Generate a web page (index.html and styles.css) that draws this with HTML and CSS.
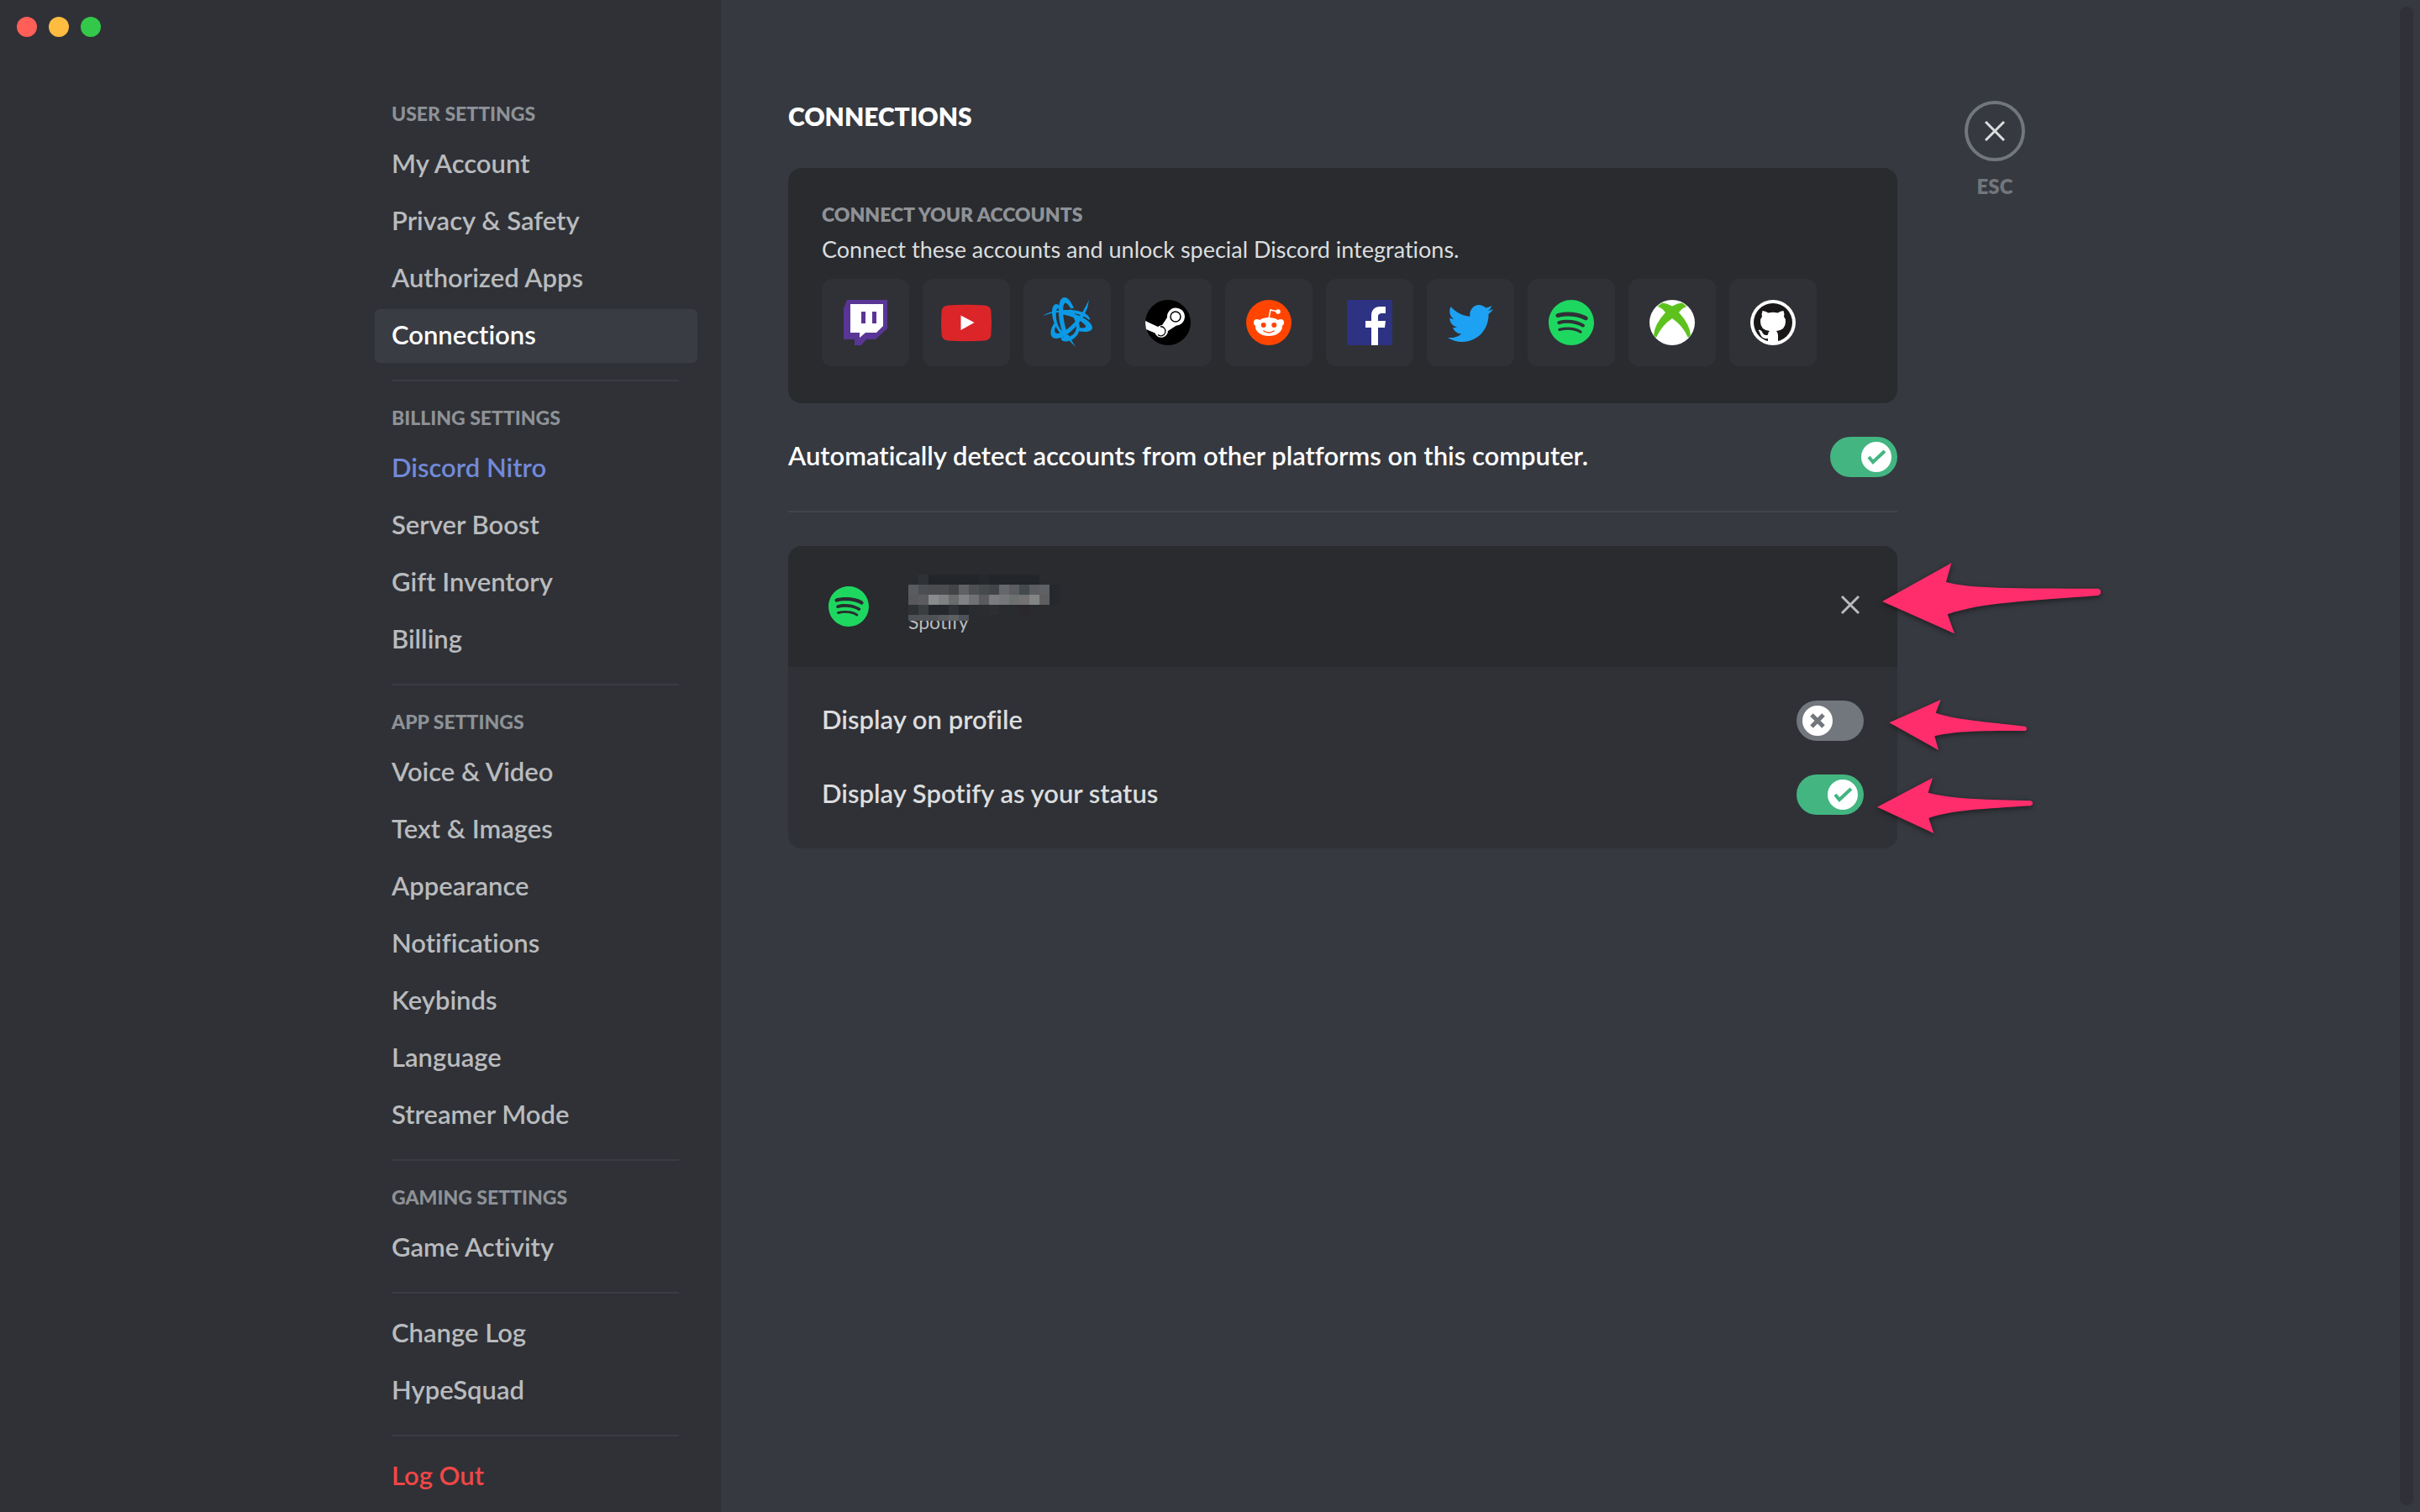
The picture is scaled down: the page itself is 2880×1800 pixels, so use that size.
FILE: index.html
```html
<!DOCTYPE html>
<html lang="en">

<head>
  <meta charset="utf-8" />
  <meta name="viewport" content="width=device-width, initial-scale=1" />

  <title>Connections</title>

  <link rel="stylesheet" href="styles.css">
</head>

<body>
  <div class="window-controls">
    <button type="button" class="control close" aria-label="Close window"></button>
    <button type="button" class="control minimize" aria-label="Minimize window"></button>
    <button type="button" class="control maximize" aria-label="Maximize window"></button>
  </div>

  <div class="settings">
    <div class="sidebar-region">
      <nav class="sidebar">
        <h2>User Settings</h2>
        <a href="#account">My Account</a>
        <a href="#privacy">Privacy &amp; Safety</a>
        <a href="#apps">Authorized Apps</a>
        <a href="#connections" class="selected" aria-current="page">Connections</a>
        <hr />
        <h2>Billing Settings</h2>
        <a href="#nitro" class="nitro">Discord Nitro</a>
        <a href="#boost">Server Boost</a>
        <a href="#gifts">Gift Inventory</a>
        <a href="#billing">Billing</a>
        <hr />
        <h2>App Settings</h2>
        <a href="#voice">Voice &amp; Video</a>
        <a href="#text">Text &amp; Images</a>
        <a href="#appearance">Appearance</a>
        <a href="#notifications">Notifications</a>
        <a href="#keybinds">Keybinds</a>
        <a href="#language">Language</a>
        <a href="#streamer">Streamer Mode</a>
        <hr />
        <h2>Gaming Settings</h2>
        <a href="#activity">Game Activity</a>
        <hr />
        <a href="#changelog">Change Log</a>
        <a href="#hypesquad">HypeSquad</a>
        <hr />
        <a href="#logout" class="logout">Log Out</a>
      </nav>
    </div>

    <div class="content-region">
      <main class="content">
        <h1>Connections</h1>

        <section class="connect">
          <h3>Connect your accounts</h3>
          <p>Connect these accounts and unlock special Discord integrations.</p>

          <div class="accounts">
            <button type="button" aria-label="Twitch">
              <svg viewBox="0 0 104 104">
                <path fill="#593695" d="M30 25H78V59L64 72H53L47 79H39V72H26V35Z" />
                <path fill="#fff" d="M34 30H73V56L65 64H52L45 70V64H34Z" />
                <path fill="#593695" d="M47 39H52V53H47ZM60 39H65V53H60Z" />
              </svg>
            </button>
            <button type="button" aria-label="YouTube">
              <svg viewBox="0 0 104 104">
                <path fill="#db2529" d="M30 31.500Q52 30 74 31.500Q81 32 81.500 39Q82.500 52 81.500 66Q81 73 74 73.500Q52 75 30 73.500Q23 73 22.500 66Q21.500 52 22.500 39Q23 32 30 31.500Z" />
                <path fill="#fff" d="M45.500 43.500L61.500 52L45.500 61Z" />
              </svg>
            </button>
            <button type="button" aria-label="Battle.net">
              <svg viewBox="0 0 104 104" fill="#0c9ae6">
                <path d="M49 68C41 56 38 22 49 22C53 22 57 27 60 35L56 35C54 31 51 28 49 29C45 33 48 54 52 64Z" />
                <path d="M41 35C38 36 37 50 44 60L55 71L52 73C40 64 34 50 34 40C34 34 36 30 39 30C42 30 44 33 45 37Z" />
                <path d="M38 51L40 54C36 60 36 65 41 65C50 64 64 50 69 41L72 43C66 56 50 71 39 71C30 71 31 59 38 51Z" />
                <path d="M45 39C58 38 82 49 82 58C82 63 74 64 65 62L67 58C72 59 75 58 74 56C71 50 56 43 44 42Z" />
                <path d="M23 44C34 36 66 34 76 43C80 47 80 50 77 48C66 38 40 39 33 41Z" />
                <path d="M56 36C64 44 69 55 66 63C63 71 54 76 47 74C44 72 44 69 46 69C53 71 60 67 62 62C65 56 61 46 54 38Z" />
                <path d="M78 25L76 35L70 47L67 46ZM53 66L62 81L56 75L50 67Z" />
              </svg>
            </button>
            <button type="button" aria-label="Steam">
              <svg viewBox="0 0 104 104">
                <circle cx="52" cy="52" r="27" />
                <path fill="#fff" d="M25 50L40 57Q43 55 45 55L51 46A10.500 10.500 0 1 1 62 55.500L52 62A8 8 0 0 1 36.500 64.500L26 60Q25 55 25 50Z" />
                <circle cx="61" cy="45" r="6" fill="#fff" stroke="#000" stroke-width="1.500" />
                <path fill="none" stroke="#000" stroke-width="1.300" d="M43 56.800A5.500 5.500 0 1 1 40 66.500" />
              </svg>
            </button>
            <button type="button" aria-label="Reddit">
              <svg viewBox="0 0 104 104">
                <circle cx="52" cy="52" r="27" fill="#ff4500" />
                <circle cx="38" cy="52" r="4" fill="#fff" />
                <circle cx="66" cy="52" r="4" fill="#fff" />
                <ellipse cx="52" cy="57" rx="16" ry="11" fill="#fff" />
                <path fill="none" stroke="#fff" stroke-width="1.500" d="M52 47L54 37L63 39" />
                <circle cx="63" cy="39" r="2.800" fill="#fff" />
                <circle cx="45.700" cy="55" r="3" fill="#ff4500" />
                <circle cx="58.300" cy="55" r="3" fill="#ff4500" />
                <path fill="none" stroke="#ff4500" stroke-width="1.500" stroke-linecap="round" d="M46 62Q52 66 58 62" />
              </svg>
            </button>
            <button type="button" aria-label="Facebook">
              <svg viewBox="0 0 104 104">
                <rect x="25" y="25" width="54" height="54" rx="2" fill="#2d3282" />
                <path fill="#fff" d="M54 79V58H47V50H54V44C54 37 58 33 64 33H71V41H67C64 41 62 42 62 45V50H71L70 58H62V79Z" />
              </svg>
            </button>
            <button type="button" aria-label="Twitter">
              <svg viewBox="0 0 104 104">
                <path fill="#1da1f2" transform="translate(25 26) scale(2.250)" d="M23.953 4.57a10 10 0 01-2.825.775 4.958 4.958 0 002.163-2.723c-.951.555-2.005.959-3.127 1.184a4.920 4.920 0 00-8.384 4.482C7.690 8.095 4.067 6.130 1.640 3.162a4.822 4.822 0 00-.666 2.475c0 1.710.870 3.213 2.188 4.096a4.904 4.904 0 01-2.228-.616v.060a4.923 4.923 0 003.946 4.827 4.996 4.996 0 01-2.212.085 4.936 4.936 0 004.604 3.417 9.867 9.867 0 01-6.102 2.105c-.390 0-.779-.023-1.170-.067a13.995 13.995 0 007.557 2.209c9.053 0 13.998-7.496 13.998-13.985 0-.210 0-.420-.015-.630A9.935 9.935 0 0024 4.590z" />
              </svg>
            </button>
            <button type="button" aria-label="Spotify">
              <svg viewBox="0 0 104 104">
                <path id="spotify" fill="#1ed760" transform="translate(25 25) scale(2.250)" d="M12 0C5.400 0 0 5.400 0 12s5.400 12 12 12 12-5.400 12-12S18.660 0 12 0zm5.521 17.340c-.240.359-.660.480-1.021.240-2.820-1.740-6.360-2.101-10.561-1.141-.418.122-.779-.179-.899-.539-.120-.421.180-.780.540-.900 4.560-1.021 8.520-.600 11.640 1.320.420.180.479.659.301 1.020zm1.440-3.300c-.301.420-.841.600-1.262.300-3.239-1.980-8.159-2.580-11.939-1.380-.479.120-1.020-.120-1.140-.600-.120-.480.120-1.021.600-1.141C9.600 9.900 15 10.561 18.720 12.840c.361.181.540.780.241 1.200zm.120-3.360C15.240 8.400 8.820 8.160 5.160 9.301c-.600.179-1.200-.181-1.380-.721-.180-.601.180-1.200.720-1.381 4.260-1.260 11.280-1.020 15.721 1.621.539.300.719 1.020.419 1.560-.299.421-1.020.599-1.559.300z" />
              </svg>
            </button>
            <button type="button" aria-label="Xbox">
              <svg viewBox="0 0 104 104">
                <circle cx="52" cy="52" r="27" fill="#fff" />
                <path fill="#5dc21e" d="M34.500 33L40 28.500Q46 29 52 32.500Q58 29 64 28.500L69.500 33Q65 33.500 60 40Q73 54 74 67L71 70Q65 56 52 47Q39 56 33 70L30 67Q31 54 44 40Q39 33.500 34.500 33Z" />
              </svg>
            </button>
            <button type="button" aria-label="GitHub">
              <svg viewBox="0 0 104 104">
                <circle cx="52" cy="52" r="27" fill="#fff" />
                <circle cx="52" cy="52" r="23" fill="#191717" />
                <path fill="#fff" d="M39.500 38Q43 38 46.500 40.500Q52 39 57.500 40.500Q61 38 64.500 38Q66 42 65 45Q67 47 67 51Q67 61 56 62Q58 64 58 67V76H46V71Q39 72 37 66Q36 63 34.500 61Q38 60 40 65Q42 68 46 66.500Q46 63 48 62Q37 61 37 51Q37 47 39 45Q38 42 39.500 38Z" />
              </svg>
            </button>
          </div>
        </section>

        <div class="setting auto-detect">
          <label for="auto-detect">Automatically detect accounts from other platforms on this computer.</label>
          <span class="switch">
            <input type="checkbox" id="auto-detect" checked />
            <svg viewBox="0 0 80 48"><circle cx="55" cy="24" r="18" /><path d="M46 24L51 30L65 17" /></svg>
          </span>
        </div>

        <section class="connection">
          <header>
            <svg class="service" viewBox="25 25 54 54"><use href="#spotify" /></svg>
            <div class="info">
              <div class="name">
                <!-- pixelated account name -->
                <svg viewBox="0 0 192 55" shape-rendering="crispEdges" aria-hidden="true">
                  <rect x="12" width="12" height="12" fill="#2e3135" />
                  <rect x="24" width="60" height="12" fill="#222529" />
                  <rect x="84" width="12" height="12" fill="#25282c" />
                  <rect x="96" width="60" height="12" fill="#222529" />
                  <g transform="translate(0 12)">
                    <rect width="12" height="12" fill="#585c5f" />
                    <rect x="12" width="12" height="12" fill="#4c4e53" />
                    <rect x="24" width="24" height="12" fill="#4b4c4f" />
                    <rect x="48" width="12" height="12" fill="#434447" />
                    <rect x="60" width="12" height="12" fill="#606165" />
                    <rect x="72" width="12" height="12" fill="#4e4f52" />
                    <rect x="84" width="12" height="12" fill="#464a4d" />
                    <rect x="96" width="12" height="12" fill="#414448" />
                    <rect x="108" width="12" height="12" fill="#66676b" />
                    <rect x="120" width="12" height="12" fill="#5b5c60" />
                    <rect x="132" width="12" height="12" fill="#434a4d" />
                    <rect x="144" width="12" height="12" fill="#5c5d60" />
                    <rect x="156" width="12" height="12" fill="#606164" />
                    <rect x="168" width="12" height="24" fill="#25282c" />
                  </g>
                  <g transform="translate(0 24)">
                    <rect width="12" height="12" fill="#59595c" />
                    <rect x="12" width="12" height="12" fill="#5b5c5f" />
                    <rect x="24" width="12" height="12" fill="#8a8b8d" />
                    <rect x="36" width="12" height="12" fill="#7d8182" />
                    <rect x="48" width="12" height="12" fill="#696b6c" />
                    <rect x="60" width="12" height="12" fill="#818285" />
                    <rect x="72" width="12" height="12" fill="#707172" />
                    <rect x="84" width="12" height="12" fill="#5a5a5d" />
                    <rect x="96" width="12" height="12" fill="#7b7c80" />
                    <rect x="108" width="12" height="12" fill="#747677" />
                    <rect x="120" width="12" height="12" fill="#6c7071" />
                    <rect x="132" width="12" height="12" fill="#727273" />
                    <rect x="144" width="12" height="12" fill="#838485" />
                    <rect x="156" width="12" height="12" fill="#5e5e61" />
                  </g>
                  <g transform="translate(0 36)">
                    <rect width="12" height="12" fill="#2f3235" />
                    <rect x="12" width="12" height="12" fill="#3b3e41" />
                    <rect x="24" width="24" height="12" fill="#25282c" />
                    <rect x="48" width="12" height="12" fill="#303236" />
                    <rect x="60" width="12" height="12" fill="#25282c" />
                    <rect x="72" width="24" height="12" fill="#2a2c30" />
                    <rect x="96" width="12" height="12" fill="#2c2e32" />
                    <rect x="132" width="12" height="12" fill="#2a282c" />
                  </g>
                  <g transform="translate(0 48)">
                    <rect width="36" height="7" fill="#4e5155" />
                    <rect x="36" width="12" height="7" fill="#565a5d" />
                    <rect x="48" width="12" height="7" fill="#5d6063" />
                    <rect x="60" width="12" height="7" fill="#4f5256" />
                  </g>
                </svg>
              </div>
              <div class="type">Spotify</div>
            </div>
            <button type="button" class="disconnect" aria-label="Disconnect">
              <svg viewBox="0 0 24 24"><path d="M2 2L22 22M22 2L2 22" /></svg>
            </button>
          </header>

          <div class="options">
            <div class="setting">
              <label for="display-profile">Display on profile</label>
              <span class="switch">
                <input type="checkbox" id="display-profile" />
                <svg viewBox="0 0 80 48"><circle cx="25" cy="24" r="18" /><path d="M18 17L32 31M32 17L18 31" /></svg>
              </span>
            </div>
            <div class="setting">
              <label for="display-status">Display Spotify as your status</label>
              <span class="switch">
                <input type="checkbox" id="display-status" checked />
                <svg viewBox="0 0 80 48"><circle cx="55" cy="24" r="18" /><path d="M46 24L51 30L65 17" /></svg>
              </span>
            </div>
          </div>

          <!-- callout arrows -->
          <svg class="arrows" viewBox="450 480 840 1020" aria-hidden="true">
            <path d="M480 648L727 511L708 579C790 602 950 602 1249 602C1264 603 1264 625 1249 627C1000 647 830 652 713 694L738 763Z" />
            <path d="M505 1081L689 999L671 1046C740 1070 850 1078 989 1094C998 1096 998 1109 989 1110C850 1110 740 1110 667 1129L681 1179Z" />
            <path d="M462 1382L660 1278L644 1331C740 1356 850 1354 1009 1360C1020 1362 1020 1376 1009 1378C850 1388 720 1394 646 1422L664 1476Z" />
          </svg>
        </section>
      </main>

      <div class="tools">
        <button type="button" class="esc">
          <span class="ring">
            <svg viewBox="0 0 24 24"><path d="M1 1L23 23M23 1L1 23" /></svg>
          </span>
          ESC
        </button>
      </div>

      <div class="scrollbar"></div>
    </div>
  </div>
</body>

</html>
```
FILE: styles.css
```css
* {
  box-sizing: border-box;
}

body {
  margin: 0;
  background-color: #36393f;
  color: #dcddde;
  font-family: Lato, "Noto Sans", sans-serif;
  font-size: 31px;
  font-variant-ligatures: none;
  line-height: 40px;
}

h1,
h2,
h3,
p {
  margin: 0;
}

button {
  padding: 0;
  border: 0;
  background: none;
  font: inherit;
  color: inherit;
  cursor: pointer;
}

svg {
  display: block;
}

.window-controls {
  position: absolute;
  top: 20px;
  left: 20px;
  display: flex;
  gap: 14px;
}

.control {
  width: 24px;
  height: 24px;
  border-radius: 50%;
}

.close {
  background-color: #ff5f57;
}

.minimize {
  background-color: #febc40;
}

.maximize {
  background-color: #34c84a;
}

.settings {
  display: flex;
  min-height: 100vh;
}

/* Sidebar */

.sidebar-region {
  flex: 1 0 436px;
  display: flex;
  justify-content: flex-end;
  background-color: #2f3136;
}

.sidebar {
  width: 436px;
  padding: 108px 28px 6px 24px;
}

.sidebar h2 {
  padding: 11px 20px 13px;
  color: #8e9297;
  font-size: 23px;
  font-weight: 900;
  line-height: 32px;
  text-transform: uppercase;
}

.sidebar a {
  display: block;
  margin-bottom: 4px;
  padding: 10px 20px 14px;
  border-radius: 6px;
  color: #b9bbbe;
  font-weight: 600;
  text-decoration: none;
}

.sidebar a.selected {
  background-color: #393c43;
  color: #fff;
}

.sidebar a.nitro {
  color: #7289da;
}

.sidebar a.logout {
  color: #f04747;
}

.sidebar hr {
  height: 2px;
  margin: 20px 22px 16px 20px;
  border: 0;
  background-color: #393c42;
}

/* Content */

.content-region {
  position: relative;
  flex: 1 1 1600px;
  display: flex;
  align-items: flex-start;
}

.content {
  flex: 1 1 auto;
  min-width: 0;
  max-width: 1480px;
  padding: 118px 80px;
}

h1 {
  margin-bottom: 42px;
  color: #fff;
  font-size: 30px;
  font-weight: 800;
  text-transform: uppercase;
}

.connect {
  padding: 39px 40px 44px;
  border-radius: 16px;
  background-color: #292b2f;
}

.connect h3 {
  color: #8e9297;
  font-size: 23px;
  font-weight: 800;
  line-height: 32px;
  text-transform: uppercase;
}

.connect p {
  margin: 6px 0 15px;
  font-size: 27px;
}

.accounts {
  display: flex;
  flex-wrap: wrap;
  gap: 16px;
}

.accounts button {
  width: 104px;
  height: 104px;
  border-radius: 12px;
  background-color: #2f3136;
}

.setting {
  display: flex;
  align-items: center;
  justify-content: space-between;
  gap: 40px;
  font-weight: 600;
}

.setting label {
  padding-bottom: 4px;
}

.auto-detect {
  padding: 40px 0;
  margin-bottom: 40px;
  border-bottom: 2px solid #42454a;
  color: #fff;
}

.switch {
  position: relative;
  flex: none;
  width: 80px;
  height: 48px;
}

.switch input {
  display: block;
  width: 80px;
  height: 48px;
  margin: 0;
  border-radius: 24px;
  background-color: #72767d;
  appearance: none;
  cursor: pointer;
}

.switch input:checked {
  background-color: #43b581;
}

.switch svg {
  position: absolute;
  top: 0;
  left: 0;
  fill: #fff;
  pointer-events: none;
}

.switch path {
  fill: none;
  stroke: #72767d;
  stroke-width: 5;
}

.switch input:checked + svg path {
  stroke: #43b581;
  stroke-width: 4;
}

.connection {
  position: relative;
  border-radius: 16px;
  background-color: #2f3136;
}

.connection header {
  display: flex;
  align-items: center;
  height: 144px;
  padding: 0 40px 0 48px;
  border-radius: 16px 16px 0 0;
  background-color: #292b2f;
}

.service {
  width: 48px;
  height: 48px;
}

.info {
  margin-left: 47px;
}

.name {
  position: relative;
  height: 38px;
}

.name svg {
  position: absolute;
  top: -4px;
  left: 0;
  width: 192px;
  height: 55px;
}

.type {
  padding-bottom: 2px;
  color: #b9bbbe;
  font-size: 23px;
  line-height: 28px;
}

.disconnect {
  margin-left: auto;
  padding: 4px 4px 8px;
}

.disconnect svg {
  width: 24px;
  height: 24px;
  fill: none;
  stroke: #b9bbbe;
  stroke-width: 3;
}

.options {
  display: grid;
  gap: 40px;
  padding: 40px;
}

.arrows {
  position: absolute;
  top: 10px;
  right: -252px;
  width: 280px;
  height: 340px;
  fill: #ff2d6b;
  filter: drop-shadow(0 2px 3px rgba(0, 0, 0, 0.5));
  pointer-events: none;
}

/* Close */

.tools {
  flex: none;
  padding-top: 120px;
}

.esc {
  display: flex;
  flex-direction: column;
  align-items: center;
  gap: 14px;
  color: #72767d;
  font-size: 24px;
  font-weight: 800;
  line-height: 32px;
}

.ring {
  display: flex;
  align-items: center;
  justify-content: center;
  width: 72px;
  height: 72px;
  border: 4px solid #72767d;
  border-radius: 50%;
}

.ring svg {
  width: 24px;
  height: 24px;
  fill: none;
  stroke: #dcddde;
  stroke-width: 3;
}

.scrollbar {
  position: absolute;
  top: 8px;
  right: 8px;
  bottom: 8px;
  width: 16px;
  border-radius: 8px;
  background-color: #2f3136;
}
```
